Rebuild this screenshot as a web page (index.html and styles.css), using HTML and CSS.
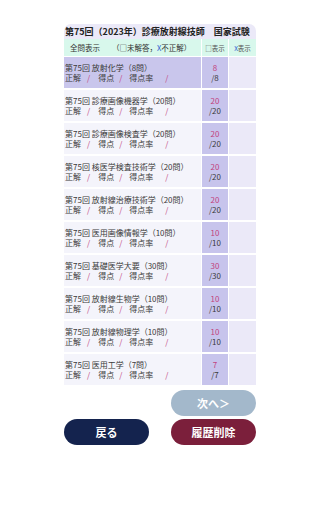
FILE: index.html
```html
<!DOCTYPE html>
<html lang="ja">
<head>
<meta charset="utf-8">
<link rel="stylesheet" href="styles.css">
</head>
<body>
<div class="wrap">
  <div class="title">第75回（2023年）診療放射線技師　国家試験</div>
  <div class="head">
    <div class="hmain"><span class="all">全問表示</span><span>（□未解答，<span class="x">X</span>不正解）</span></div>
    <div class="hc">□表示</div>
    <div class="hc"><span class="x">X</span>表示</div>
  </div>
  <div class="list">
    <div class="row sel">
      <div class="main"><div class="name">第75回 放射化学（8問）</div><div class="stat"><span>正解</span><span class="sl s1">/</span><span>得点</span><span class="sl s2">/</span><span>得点率</span><span class="sl s3">/</span></div></div>
      <div class="score"><div class="got">8</div><div class="tot">/8</div></div>
      <div class="mark"></div>
    </div>
    <div class="row">
      <div class="main"><div class="name">第75回 診療画像機器学（20問）</div><div class="stat"><span>正解</span><span class="sl s1">/</span><span>得点</span><span class="sl s2">/</span><span>得点率</span><span class="sl s3">/</span></div></div>
      <div class="score"><div class="got">20</div><div class="tot">/20</div></div>
      <div class="mark"></div>
    </div>
    <div class="row">
      <div class="main"><div class="name">第75回 診療画像検査学（20問）</div><div class="stat"><span>正解</span><span class="sl s1">/</span><span>得点</span><span class="sl s2">/</span><span>得点率</span><span class="sl s3">/</span></div></div>
      <div class="score"><div class="got">20</div><div class="tot">/20</div></div>
      <div class="mark"></div>
    </div>
    <div class="row">
      <div class="main"><div class="name">第75回 核医学検査技術学（20問）</div><div class="stat"><span>正解</span><span class="sl s1">/</span><span>得点</span><span class="sl s2">/</span><span>得点率</span><span class="sl s3">/</span></div></div>
      <div class="score"><div class="got">20</div><div class="tot">/20</div></div>
      <div class="mark"></div>
    </div>
    <div class="row">
      <div class="main"><div class="name">第75回 放射線治療技術学（20問）</div><div class="stat"><span>正解</span><span class="sl s1">/</span><span>得点</span><span class="sl s2">/</span><span>得点率</span><span class="sl s3">/</span></div></div>
      <div class="score"><div class="got">20</div><div class="tot">/20</div></div>
      <div class="mark"></div>
    </div>
    <div class="row">
      <div class="main"><div class="name">第75回 医用画像情報学（10問）</div><div class="stat"><span>正解</span><span class="sl s1">/</span><span>得点</span><span class="sl s2">/</span><span>得点率</span><span class="sl s3">/</span></div></div>
      <div class="score"><div class="got">10</div><div class="tot">/10</div></div>
      <div class="mark"></div>
    </div>
    <div class="row">
      <div class="main"><div class="name">第75回 基礎医学大要（30問）</div><div class="stat"><span>正解</span><span class="sl s1">/</span><span>得点</span><span class="sl s2">/</span><span>得点率</span><span class="sl s3">/</span></div></div>
      <div class="score"><div class="got">30</div><div class="tot">/30</div></div>
      <div class="mark"></div>
    </div>
    <div class="row">
      <div class="main"><div class="name">第75回 放射線生物学（10問）</div><div class="stat"><span>正解</span><span class="sl s1">/</span><span>得点</span><span class="sl s2">/</span><span>得点率</span><span class="sl s3">/</span></div></div>
      <div class="score"><div class="got">10</div><div class="tot">/10</div></div>
      <div class="mark"></div>
    </div>
    <div class="row">
      <div class="main"><div class="name">第75回 放射線物理学（10問）</div><div class="stat"><span>正解</span><span class="sl s1">/</span><span>得点</span><span class="sl s2">/</span><span>得点率</span><span class="sl s3">/</span></div></div>
      <div class="score"><div class="got">10</div><div class="tot">/10</div></div>
      <div class="mark"></div>
    </div>
    <div class="row">
      <div class="main"><div class="name">第75回 医用工学（7問）</div><div class="stat"><span>正解</span><span class="sl s1">/</span><span>得点</span><span class="sl s2">/</span><span>得点率</span><span class="sl s3">/</span></div></div>
      <div class="score"><div class="got">7</div><div class="tot">/7</div></div>
      <div class="mark"></div>
    </div>
  </div>
  <div class="btns">
    <div class="btn next">次へ＞</div>
    <div class="btn back">戻る</div>
    <div class="btn del">履歴削除</div>
  </div>
</div>
</body>
</html>
```

FILE: styles.css
```css
html, body {
  margin: 0;
  padding: 0;
  background: #ffffff;
}
body {
  font-family: "Noto Sans CJK JP", "Noto Sans", sans-serif;
  color: #3a3a3a;
}
.wrap {
  width: 192px;
  margin: 24px auto 0;
  display: flex;
  flex-direction: column;
}
.title {
  height: 15px;
  line-height: 15px;
  background: #ebe9f8;
  border-radius: 7px 7px 0 0;
  font-size: 9px;
  font-weight: bold;
  color: #222;
  padding-left: 1px;
  white-space: nowrap;
}
.head {
  display: grid;
  grid-template-columns: 137px 26px 27px;
  column-gap: 1px;
  height: 17px;
  margin-bottom: 1px;
}
.head > div {
  background: #d8f8ec;
  display: flex;
  align-items: center;
}
.hmain {
  font-size: 7.5px;
  color: #333;
  padding-left: 6px;
  white-space: nowrap;
}
.hmain .all {
  margin-right: 12px;
}
.hc {
  justify-content: center;
  font-size: 6.5px;
  color: #555;
  white-space: nowrap;
}
.x {
  color: #2f5fd0;
}
.list {
  display: flex;
  flex-direction: column;
  gap: 2px;
}
.row {
  display: grid;
  grid-template-columns: 137px 26px 27px;
  column-gap: 1px;
  height: 31px;
}
.main {
  background: #f4f4fb;
  padding: 6px 0 0 1px;
  font-size: 8px;
  line-height: 10px;
  color: #3a3a3a;
  white-space: nowrap;
}
.row.sel .main {
  background: #c9c6ec;
}
.stat {
  display: flex;
}
.sl {
  color: #c2417c;
}
.s1 { margin: 0 8px 0 6px; }
.s2 { margin: 0 7px 0 5px; }
.s3 { margin: 0 0 0 12px; }
.score {
  background: #c7c4ec;
  padding-top: 6px;
  font-size: 8px;
  line-height: 10px;
  text-align: center;
}
.got {
  color: #c2417c;
}
.tot {
  color: #3a3a3a;
}
.mark {
  background: #ebe9f8;
}
.btns {
  display: grid;
  grid-template-columns: 85px 85px;
  justify-content: space-between;
  row-gap: 3px;
  margin-top: 5px;
}
.btn {
  height: 26px;
  border-radius: 13px;
  display: flex;
  align-items: center;
  justify-content: center;
  font-size: 11px;
  font-weight: bold;
  color: #ffffff;
}
.next {
  grid-column: 2;
  background: #a3b8cb;
}
.back {
  background: #14234e;
}
.del {
  background: #7b1f3b;
}
```
